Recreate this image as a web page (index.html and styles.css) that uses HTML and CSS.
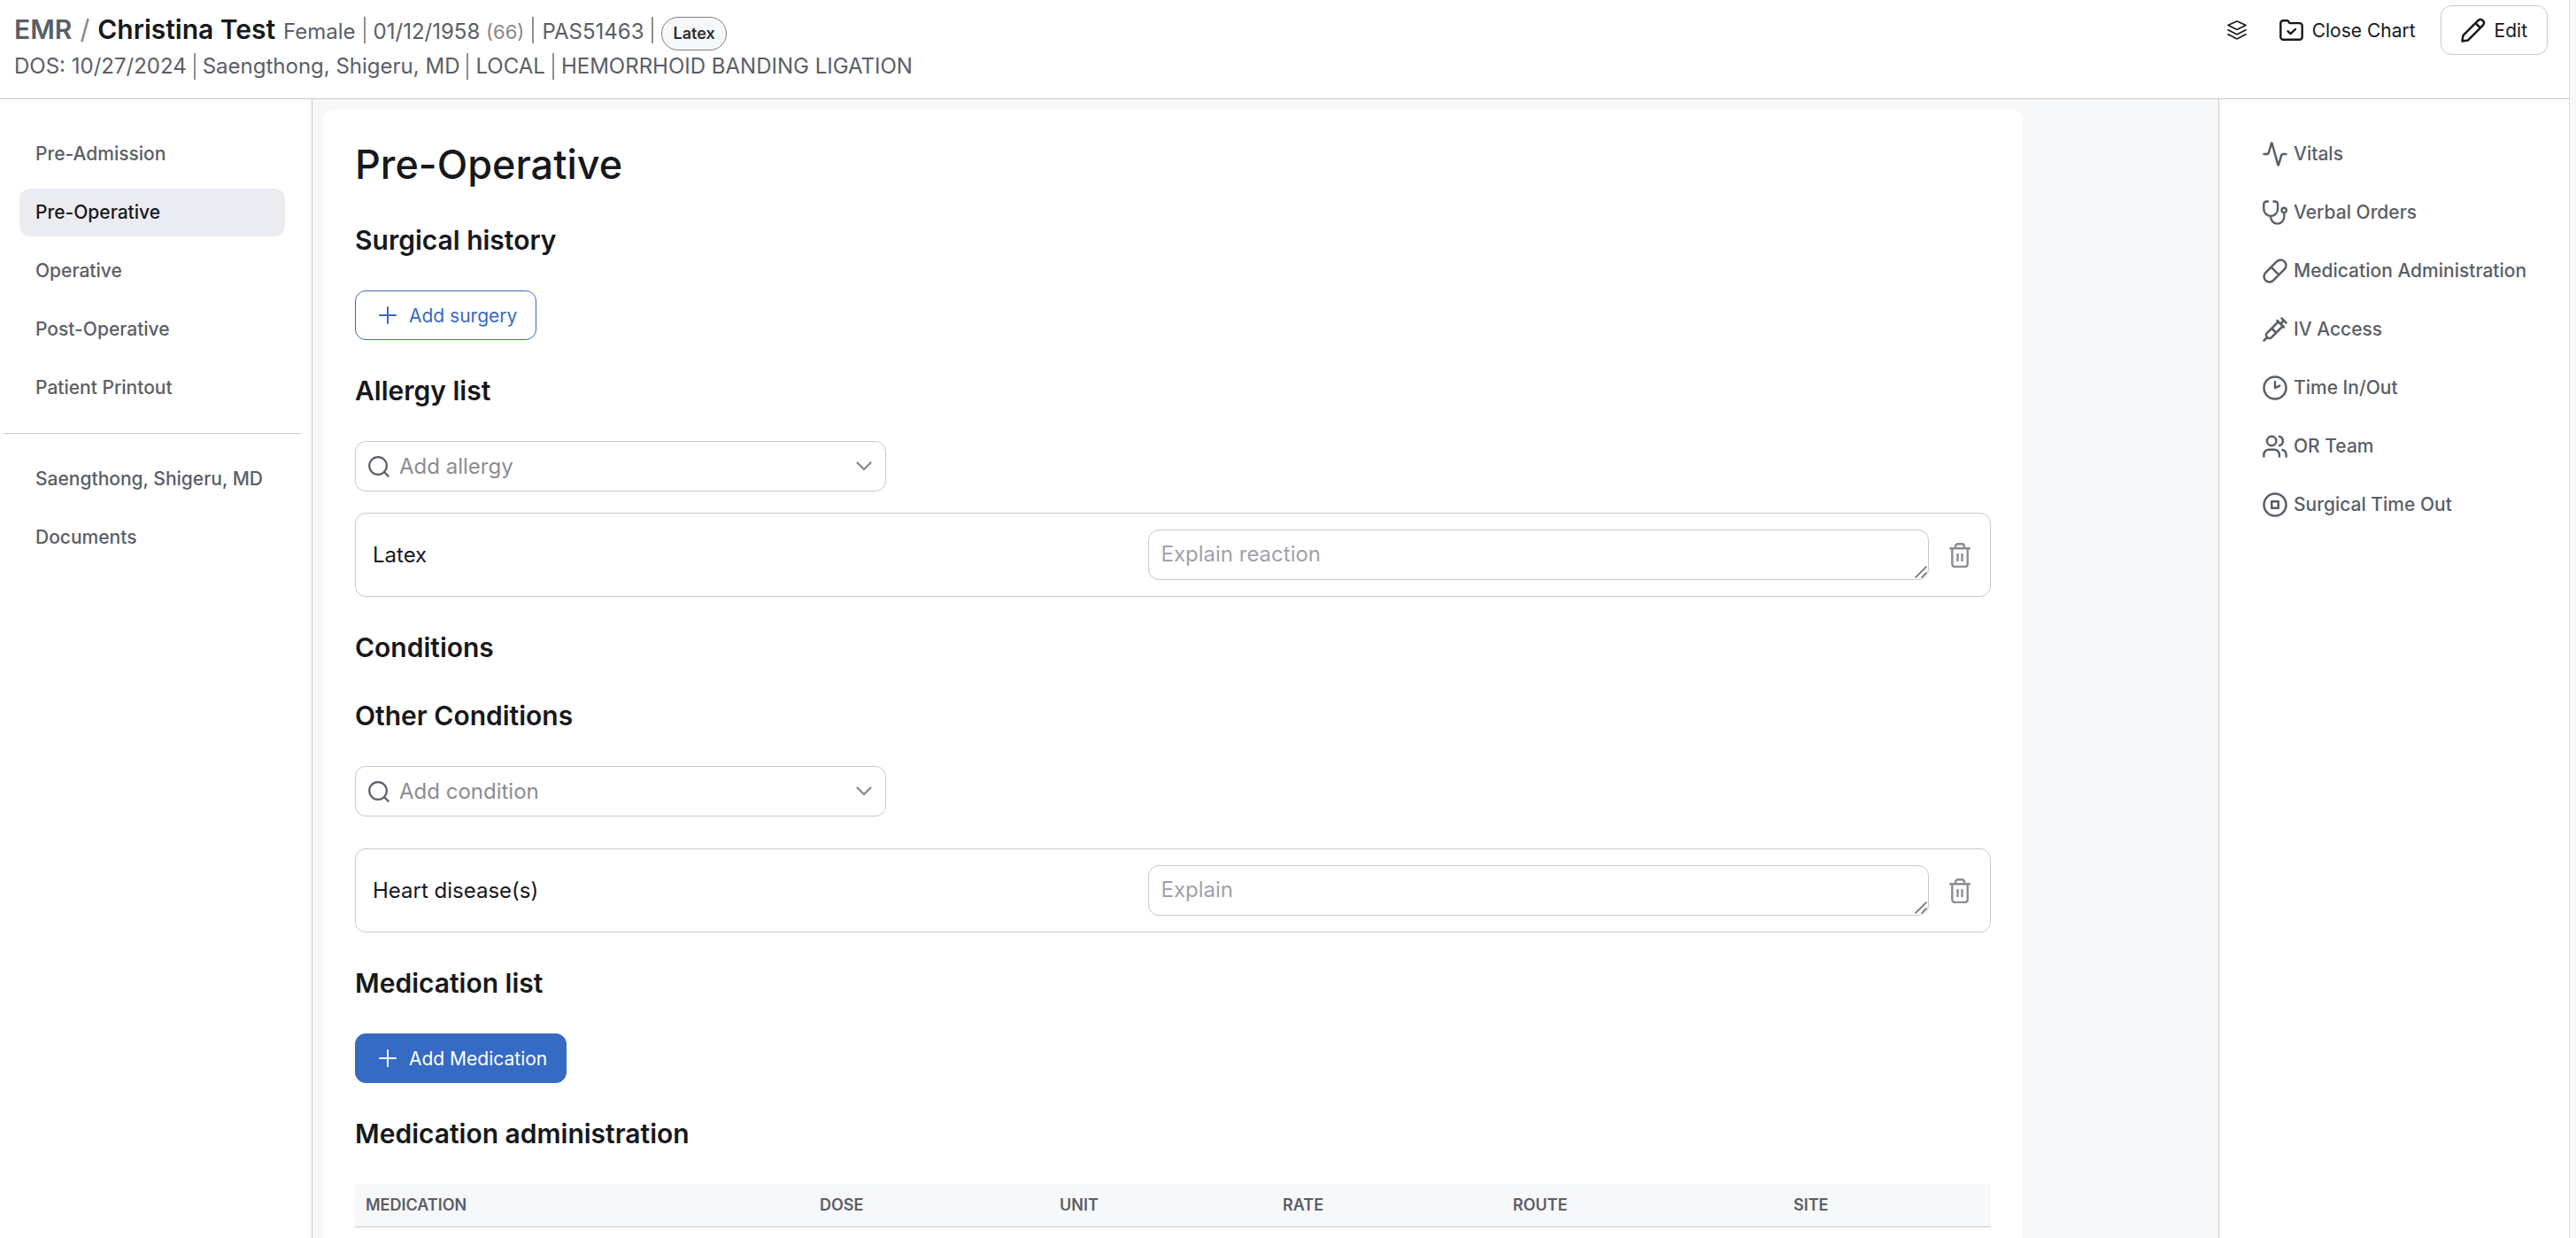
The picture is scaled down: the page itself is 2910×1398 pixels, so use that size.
FILE: index.html
```
<!DOCTYPE html>
<html lang="en">
<head>
  <meta charset="UTF-8" />
  <title>EMR - Christina Test</title>
  <meta name="viewport" content="width=device-width, initial-scale=1.0"/>
  <link rel="stylesheet" href="styles.css">
</head>
<body>
  <div class="app">

    <!-- Patient header -->
    <header class="header">
      <div class="patient">
        <div class="patient-line patient-main">
          <a class="emr" href="#">EMR</a>
          <span class="slash">/</span>
          <span class="patient-name">Christina Test</span>
          <span>Female</span>
          <span class="sep"></span>
          <span>01/12/1958 <span class="age">(66)</span></span>
          <span class="sep"></span>
          <span>PAS51463</span>
          <span class="sep"></span>
          <span class="badge">Latex</span>
        </div>
        <div class="patient-line">
          <span>DOS: 10/27/2024</span>
          <span class="sep"></span>
          <span>Saengthong, Shigeru, MD</span>
          <span class="sep"></span>
          <span>LOCAL</span>
          <span class="sep"></span>
          <span>HEMORRHOID BANDING LIGATION</span>
        </div>
      </div>
      <div class="actions">
        <button type="button" class="link-btn" aria-label="Layers">
          <svg class="line-icon" width="22" height="22" viewBox="0 0 22 22"><path stroke-width="1.7" d="M1 5.5 10.2 1.3q.8-.4 1.6 0L21 5.5l-9.2 4.6q-.8.4-1.6 0zM1 10.8l9.2 4.8q.8.4 1.6 0l9.2-4.8M1 15.8l9.2 4.8q.8.4 1.6 0l9.2-4.8"/></svg>
        </button>
        <button type="button" class="link-btn">
          <svg class="line-icon" width="27" height="24" viewBox="0 0 27 24"><path stroke-width="2.4" d="M1.3 4.3a3 3 0 0 1 3-3h4.2c.9 0 1.5.4 1.9 1.1l1.1 1.7h11.2a3 3 0 0 1 3 3v12.6a3 3 0 0 1-3 3H4.3a3 3 0 0 1-3-3zM9.6 13.3l3 2.9 5.4-5.2"/></svg>
          Close Chart
        </button>
        <button type="button" class="edit-btn">
          <svg class="line-icon" width="28" height="28" viewBox="0 0 28 28"><path stroke-width="2.5" d="M1.5 26.5l.9-6.3L19.7 2.9a3.85 3.85 0 0 1 5.4 5.4L7.8 25.6zM16.5 6.1l5.4 5.4"/></svg>
          Edit
        </button>
      </div>
    </header>

    <div class="layout">

      <!-- Chart sections -->
      <nav class="sidebar" aria-label="Chart sections">
        <a class="nav-item" href="#">Pre-Admission</a>
        <a class="nav-item active" href="#" aria-current="page">Pre-Operative</a>
        <a class="nav-item" href="#">Operative</a>
        <a class="nav-item" href="#">Post-Operative</a>
        <a class="nav-item" href="#">Patient Printout</a>
        <hr class="divider">
        <a class="nav-item" href="#">Saengthong, Shigeru, MD</a>
        <a class="nav-item" href="#">Documents</a>
      </nav>

      <main class="content">
        <div class="chart">
          <h1>Pre-Operative</h1>

          <h2>Surgical history</h2>
          <button type="button" class="add-btn">
            <svg class="line-icon" width="30" height="30" viewBox="0 0 24 24"><path stroke-width="1.6" d="M12 4.8v14.4M4.8 12h14.4"/></svg>
            Add surgery
          </button>

          <h2>Allergy list</h2>
          <div class="combo">
            <svg class="line-icon" width="24" height="24" viewBox="0 0 24 24"><path stroke-width="2.2" d="M20.8 11a9.8 9.8 0 1 1-19.6 0 9.8 9.8 0 0 1 19.6 0zM18.2 18.2l4.4 4.4"/></svg>
            <input type="text" role="combobox" aria-expanded="false" aria-label="Add allergy" placeholder="Add allergy">
            <svg class="line-icon chevron" width="18" height="11" viewBox="0 0 18 11"><path stroke-width="2.2" d="M1.5 1.5 9 9l7.5-7.5"/></svg>
          </div>
          <div class="entry">
            <label for="latex">Latex</label>
            <div class="note">
              <textarea id="latex" rows="1" placeholder="Explain reaction"></textarea>
              <svg class="line-icon grip" width="14" height="14" viewBox="0 0 14 14"><path stroke-width="1.5" d="M1 13 13 1M8 13l5-5"/></svg>
            </div>
            <button type="button" class="delete-btn" aria-label="Remove Latex">
              <svg class="line-icon" width="24" height="28" viewBox="0 0 24 28"><path stroke-width="2.4" d="M1.2 6.3h21.6M3.3 6.5v17.6a2.8 2.8 0 0 0 2.8 2.8h11.8a2.8 2.8 0 0 0 2.8-2.8V6.5M7 6V4.2A2.9 2.9 0 0 1 9.9 1.3h4.2A2.9 2.9 0 0 1 17 4.2V6M9.5 13v7M14.5 13v7"/></svg>
            </button>
          </div>

          <h2>Conditions</h2>
          <h2>Other Conditions</h2>
          <div class="combo">
            <svg class="line-icon" width="24" height="24" viewBox="0 0 24 24"><path stroke-width="2.2" d="M20.8 11a9.8 9.8 0 1 1-19.6 0 9.8 9.8 0 0 1 19.6 0zM18.2 18.2l4.4 4.4"/></svg>
            <input type="text" role="combobox" aria-expanded="false" aria-label="Add condition" placeholder="Add condition">
            <svg class="line-icon chevron" width="18" height="11" viewBox="0 0 18 11"><path stroke-width="2.2" d="M1.5 1.5 9 9l7.5-7.5"/></svg>
          </div>
          <div class="entry entry-condition">
            <label for="heart">Heart disease(s)</label>
            <div class="note">
              <textarea id="heart" rows="1" placeholder="Explain"></textarea>
              <svg class="line-icon grip" width="14" height="14" viewBox="0 0 14 14"><path stroke-width="1.5" d="M1 13 13 1M8 13l5-5"/></svg>
            </div>
            <button type="button" class="delete-btn" aria-label="Remove Heart disease(s)">
              <svg class="line-icon" width="24" height="28" viewBox="0 0 24 28"><path stroke-width="2.4" d="M1.2 6.3h21.6M3.3 6.5v17.6a2.8 2.8 0 0 0 2.8 2.8h11.8a2.8 2.8 0 0 0 2.8-2.8V6.5M7 6V4.2A2.9 2.9 0 0 1 9.9 1.3h4.2A2.9 2.9 0 0 1 17 4.2V6M9.5 13v7M14.5 13v7"/></svg>
            </button>
          </div>

          <h2>Medication list</h2>
          <button type="button" class="add-btn primary">
            <svg class="line-icon" width="30" height="30" viewBox="0 0 24 24"><path stroke-width="1.6" d="M12 4.8v14.4M4.8 12h14.4"/></svg>
            Add Medication
          </button>

          <h2>Medication administration</h2>
          <table class="med-table">
            <thead>
              <tr>
                <th class="col-medication">Medication</th>
                <th class="col-dose">Dose</th>
                <th class="col-unit">Unit</th>
                <th class="col-rate">Rate</th>
                <th class="col-route">Route</th>
                <th class="col-site">Site</th>
              </tr>
            </thead>
          </table>
        </div>
      </main>

      <!-- Quick links -->
      <nav class="tools" aria-label="Chart tools">
        <a class="nav-item" href="#">
          <svg class="line-icon" width="30" height="30" viewBox="0 0 24 24"><path d="M22 12h-2.48a2 2 0 0 0-1.93 1.46l-2.35 8.36a.25.25 0 0 1-.48 0L9.24 2.18a.25.25 0 0 0-.48 0l-2.35 8.36A2 2 0 0 1 4.49 12H2"/></svg>
          Vitals
        </a>
        <a class="nav-item" href="#">
          <svg class="line-icon" width="30" height="30" viewBox="-1 -1 30 30"><path stroke-width="2.4" d="M6 1.5H4.3a3 3 0 0 0-3 3v5.5a7.9 7.9 0 0 0 15.8 0V4.5a3 3 0 0 0-3-3h-1.7M9.1 18v1a7.6 7.6 0 0 0 15.2 0v-4.5M26.9 11.4a2.7 2.7 0 1 1-5.4 0 2.7 2.7 0 0 1 5.4 0z"/></svg>
          Verbal Orders
        </a>
        <a class="nav-item" href="#">
          <svg class="line-icon" width="30" height="30" viewBox="0 0 24 24"><path d="m10.5 20.5 10-10a4.95 4.95 0 1 0-7-7l-10 10a4.95 4.95 0 1 0 7 7ZM8.5 8.5l7 7"/></svg>
          Medication Administration
        </a>
        <a class="nav-item" href="#">
          <svg class="line-icon" width="30" height="30" viewBox="0 0 24 24"><path d="m18 2 4 4M17 7l3-3M19 9 8.7 19.3c-1 1-2.5 1-3.4 0l-.6-.6c-1-1-1-2.5 0-3.4L15 5M9 11l4 4M5 19l-3 3M14 4l6 6"/></svg>
          IV Access
        </a>
        <a class="nav-item" href="#">
          <svg class="line-icon" width="30" height="30" viewBox="0 0 24 24"><circle cx="12" cy="12" r="10"/><path d="M12 6.5V12l4.2-1.9"/></svg>
          Time In/Out
        </a>
        <a class="nav-item" href="#">
          <svg class="line-icon" width="30" height="30" viewBox="0 0 24 24"><circle cx="8.9" cy="7.2" r="4.2"/><path d="M1.9 21.2v-1.7A4.5 4.5 0 0 1 6.4 15h5a4.5 4.5 0 0 1 4.5 4.5v1.7M16 3.1a4.25 4.25 0 0 1 0 8.2M18.7 15.2a4.5 4.5 0 0 1 3.4 4.3v1.7"/></svg>
          OR Team
        </a>
        <a class="nav-item" href="#">
          <svg class="line-icon" width="30" height="30" viewBox="0 0 24 24"><circle cx="12" cy="12" r="10"/><rect x="9" y="9" width="6" height="6"/></svg>
          Surgical Time Out
        </a>
      </nav>
    </div>
  </div>
</body>
</html>
```

FILE: styles.css
```
* {
  box-sizing: border-box;
}
body {
  margin: 0;
  padding-right: 7px;
  background: #f7f8fa;
  font-family: Inter, "Liberation Sans", sans-serif;
  font-size: 24px;
  line-height: 32px;
  color: #17181c;
}
a {
  color: inherit;
  text-decoration: none;
}
button,
input,
textarea {
  font-family: inherit;
  color: inherit;
}
button {
  cursor: pointer;
}
.app {
  display: flex;
  flex-direction: column;
  min-height: 100vh;
  border-right: 1px solid #d8d9dd;
}
.line-icon {
  flex: none;
  fill: none;
  stroke: currentColor;
  stroke-width: 2;
  stroke-linecap: round;
  stroke-linejoin: round;
}

/* Header */
.header {
  display: flex;
  justify-content: space-between;
  align-items: flex-start;
  height: 112px;
  padding: 6px 24px 0 16px;
  background: #fff;
  border-bottom: 1px solid #c9cacd;
}
.patient {
  padding-top: 7px;
  color: #5a5e68;
}
.patient-line {
  display: flex;
  align-items: baseline;
  gap: 8px;
  height: 40px;
  line-height: 40px;
  white-space: nowrap;
}
.patient-main {
  gap: 9px;
  height: 42px;
}
.emr,
.slash,
.patient-name {
  font-size: 30px;
}
.emr,
.patient-name {
  font-weight: 600;
}
.slash,
.age {
  color: #85868d;
}
.patient-name {
  color: #17181c;
}
.age {
  font-size: 22px;
}
.sep {
  align-self: center;
  width: 2px;
  height: 30px;
  background: #8d8e94;
}
.badge {
  height: 38px;
  padding: 0 12px;
  border: 1px solid #7f8086;
  border-radius: 19px;
  background: #f7f8fa;
  color: #2c2d33;
  font-size: 18px;
  font-weight: 600;
  line-height: 36px;
}
.actions {
  display: flex;
  align-items: center;
}
.link-btn,
.edit-btn {
  display: flex;
  align-items: center;
  gap: 10px;
  height: 56px;
  padding: 0;
  border: none;
  background: none;
  font-size: 21px;
}
.link-btn {
  margin-right: 28px;
}
.link-btn:first-child {
  margin-right: 37px;
}
.edit-btn {
  padding: 0 22px;
  border: 1px solid #c9cacd;
  border-radius: 12px;
}

/* Columns */
.layout {
  flex: 1;
  display: flex;
}
.sidebar {
  flex: none;
  width: 353px;
  padding: 35px 30px 0 22px;
  background: #fff;
  border-right: 1px solid #c9cacd;
}
.nav-item {
  display: flex;
  align-items: center;
  gap: 6px;
  height: 54px;
  margin-bottom: 12px;
  padding: 0 18px;
  border-radius: 12px;
  color: #5a5e68;
  font-size: 21px;
  font-weight: 500;
  white-space: nowrap;
}
.nav-item.active {
  background: #ebecf2;
  color: #17181c;
}
.divider {
  height: 1px;
  margin: 24px -18px;
  border: none;
  background: #c9cacd;
}
.tools {
  flex: none;
  width: 396px;
  padding: 35px 30px 0;
  background: #fff;
  border-left: 1px solid #c9cacd;
}
.content {
  flex: 1;
  display: flex;
  min-width: 0;
  padding: 12px 12px 0;
}

/* Chart */
.chart {
  width: 100%;
  max-width: 1920px;
  padding: 32px 36px 0;
  background: #fff;
  border-radius: 12px 12px 0 0;
}
h1 {
  margin: 0;
  font-size: 45px;
  font-weight: 500;
  line-height: 60px;
}
h2 {
  margin: 37px 0;
  font-size: 30px;
  font-weight: 600;
  line-height: 40px;
}
h1 + h2 {
  margin-top: 35px;
}
.add-btn {
  display: flex;
  align-items: center;
  gap: 9px;
  height: 56px;
  padding: 0 21px;
  border: 1px solid #356ac5;
  border-radius: 12px;
  background: #fff;
  color: #356ac5;
  font-size: 21px;
}
.add-btn.primary {
  background: #356ac5;
  color: #fff;
}
.combo {
  display: flex;
  align-items: center;
  gap: 11px;
  width: 600px;
  max-width: 100%;
  height: 57px;
  padding: 0 15px 0 14px;
  border: 1px solid #c9cacd;
  border-radius: 12px;
  color: #5a5e68;
}
.combo input {
  flex: 1;
  min-width: 0;
  padding: 0;
  border: none;
  outline: none;
  background: none;
  font-size: 24px;
  line-height: 32px;
}
.combo input::placeholder {
  color: #8b8c93;
}
.chevron {
  color: #85868d;
}
.entry {
  display: grid;
  grid-template-columns: 1fr 1fr 24px;
  align-items: center;
  margin-top: 24px;
  padding: 18px 22px 18px 19px;
  border: 1px solid #c9cacd;
  border-radius: 12px;
}
.entry-condition {
  margin-top: 36px;
}
.note {
  display: flex;
  position: relative;
  margin-right: 23px;
  margin-left: -15px;
}
.note textarea {
  width: 100%;
  height: 57px;
  padding: 11px 14px;
  border: 1px solid #c9cacd;
  border-radius: 12px;
  resize: none;
  overflow: hidden;
  font-size: 24px;
  line-height: 32px;
}
.note textarea::placeholder {
  color: #9fa2ab;
}
.grip {
  position: absolute;
  right: 2px;
  bottom: 2px;
  color: #5a5e68;
  pointer-events: none;
}
.delete-btn {
  display: flex;
  padding: 0;
  border: none;
  background: none;
  color: #8b8c93;
}

/* Medication table */
.med-table {
  width: 100%;
  table-layout: fixed;
  border-collapse: collapse;
}
.med-table th {
  height: 48px;
  padding: 0 12px;
  border-bottom: 1px solid #c9cacd;
  background: #f7f8fa;
  color: #5a5e68;
  font-size: 18px;
  font-weight: 600;
  line-height: 24px;
  text-align: left;
  text-transform: uppercase;
}
.col-medication {
  width: 513px;
}
.col-dose {
  width: 271px;
}
.col-unit {
  width: 252px;
}
.col-rate {
  width: 260px;
}
.col-route {
  width: 317px;
}
.col-site {
  width: 235px;
}
```
